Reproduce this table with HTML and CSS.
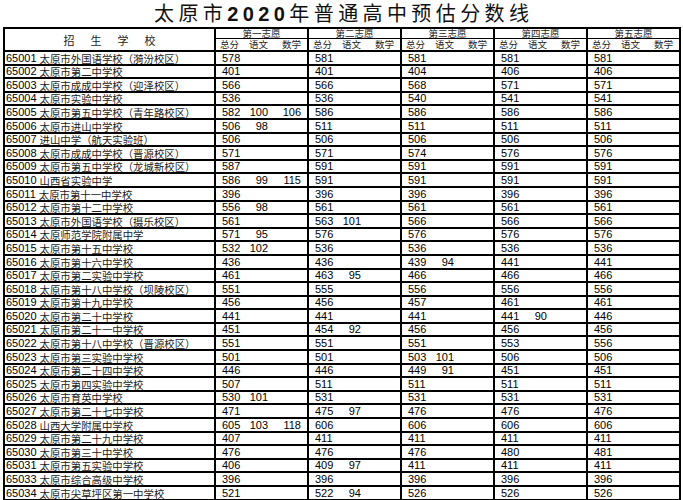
FILE: index.html
```html
<!DOCTYPE html>
<html lang="zh-CN">
<head>
<meta charset="utf-8">
<title>太原市2020年普通高中预估分数线</title>
<link rel="stylesheet" href="styles.css">
</head>
<body>
<div class="page">
<h1 class="title">太原市<span class="num">2020</span>年普通高中预估分数线</h1>
<table class="scores">
<colgroup>
<col class="c-school">
<col class="c-g"><col class="c-g"><col class="c-g"><col class="c-g"><col class="c-g">
</colgroup>
<thead>
<tr class="hr1">
<th rowspan="2" class="school-h">招生学校</th>
<th class="grp">第一志愿</th>
<th class="grp">第二志愿</th>
<th class="grp">第三志愿</th>
<th class="grp">第四志愿</th>
<th class="grp">第五志愿</th>
</tr>
<tr class="hr2">
<th class="g"><div class="v"><span>总分</span><span>语文</span><span>数学</span></div></th>
<th class="g"><div class="v"><span>总分</span><span>语文</span><span>数学</span></div></th>
<th class="g"><div class="v"><span>总分</span><span>语文</span><span>数学</span></div></th>
<th class="g"><div class="v"><span>总分</span><span>语文</span><span>数学</span></div></th>
<th class="g"><div class="v"><span>总分</span><span>语文</span><span>数学</span></div></th>
</tr>
</thead>
<tbody>
<tr><td class="school"><span class="code">65001</span><span class="name">太原市外国语学校（漪汾校区）</span></td><td class="g"><div class="v"><span>578</span><span></span><span></span></div></td><td class="g"><div class="v"><span>581</span><span></span><span></span></div></td><td class="g"><div class="v"><span>581</span><span></span><span></span></div></td><td class="g"><div class="v"><span>581</span><span></span><span></span></div></td><td class="g"><div class="v"><span>581</span><span></span><span></span></div></td></tr>
<tr><td class="school"><span class="code">65002</span><span class="name">太原市第二中学校</span></td><td class="g"><div class="v"><span>401</span><span></span><span></span></div></td><td class="g"><div class="v"><span>401</span><span></span><span></span></div></td><td class="g"><div class="v"><span>404</span><span></span><span></span></div></td><td class="g"><div class="v"><span>406</span><span></span><span></span></div></td><td class="g"><div class="v"><span>406</span><span></span><span></span></div></td></tr>
<tr><td class="school"><span class="code">65003</span><span class="name">太原市成成中学校（迎泽校区）</span></td><td class="g"><div class="v"><span>566</span><span></span><span></span></div></td><td class="g"><div class="v"><span>566</span><span></span><span></span></div></td><td class="g"><div class="v"><span>568</span><span></span><span></span></div></td><td class="g"><div class="v"><span>571</span><span></span><span></span></div></td><td class="g"><div class="v"><span>571</span><span></span><span></span></div></td></tr>
<tr><td class="school"><span class="code">65004</span><span class="name">太原市实验中学校</span></td><td class="g"><div class="v"><span>536</span><span></span><span></span></div></td><td class="g"><div class="v"><span>536</span><span></span><span></span></div></td><td class="g"><div class="v"><span>540</span><span></span><span></span></div></td><td class="g"><div class="v"><span>541</span><span></span><span></span></div></td><td class="g"><div class="v"><span>541</span><span></span><span></span></div></td></tr>
<tr><td class="school"><span class="code">65005</span><span class="name">太原市第五中学校（青年路校区）</span></td><td class="g"><div class="v"><span>582</span><span>100</span><span>106</span></div></td><td class="g"><div class="v"><span>586</span><span></span><span></span></div></td><td class="g"><div class="v"><span>586</span><span></span><span></span></div></td><td class="g"><div class="v"><span>586</span><span></span><span></span></div></td><td class="g"><div class="v"><span>586</span><span></span><span></span></div></td></tr>
<tr><td class="school"><span class="code">65006</span><span class="name">太原市进山中学校</span></td><td class="g"><div class="v"><span>506</span><span>98</span><span></span></div></td><td class="g"><div class="v"><span>511</span><span></span><span></span></div></td><td class="g"><div class="v"><span>511</span><span></span><span></span></div></td><td class="g"><div class="v"><span>511</span><span></span><span></span></div></td><td class="g"><div class="v"><span>511</span><span></span><span></span></div></td></tr>
<tr><td class="school"><span class="code">65007</span><span class="name">进山中学（航天实验班）</span></td><td class="g"><div class="v"><span>506</span><span></span><span></span></div></td><td class="g"><div class="v"><span>506</span><span></span><span></span></div></td><td class="g"><div class="v"><span>506</span><span></span><span></span></div></td><td class="g"><div class="v"><span>506</span><span></span><span></span></div></td><td class="g"><div class="v"><span>506</span><span></span><span></span></div></td></tr>
<tr><td class="school"><span class="code">65008</span><span class="name">太原市成成中学校（晋源校区）</span></td><td class="g"><div class="v"><span>571</span><span></span><span></span></div></td><td class="g"><div class="v"><span>571</span><span></span><span></span></div></td><td class="g"><div class="v"><span>574</span><span></span><span></span></div></td><td class="g"><div class="v"><span>576</span><span></span><span></span></div></td><td class="g"><div class="v"><span>576</span><span></span><span></span></div></td></tr>
<tr><td class="school"><span class="code">65009</span><span class="name">太原市第五中学校（龙城新校区）</span></td><td class="g"><div class="v"><span>587</span><span></span><span></span></div></td><td class="g"><div class="v"><span>591</span><span></span><span></span></div></td><td class="g"><div class="v"><span>591</span><span></span><span></span></div></td><td class="g"><div class="v"><span>591</span><span></span><span></span></div></td><td class="g"><div class="v"><span>591</span><span></span><span></span></div></td></tr>
<tr><td class="school"><span class="code">65010</span><span class="name">山西省实验中学</span></td><td class="g"><div class="v"><span>586</span><span>99</span><span>115</span></div></td><td class="g"><div class="v"><span>591</span><span></span><span></span></div></td><td class="g"><div class="v"><span>591</span><span></span><span></span></div></td><td class="g"><div class="v"><span>591</span><span></span><span></span></div></td><td class="g"><div class="v"><span>591</span><span></span><span></span></div></td></tr>
<tr><td class="school"><span class="code">65011</span><span class="name">太原市第十一中学校</span></td><td class="g"><div class="v"><span>396</span><span></span><span></span></div></td><td class="g"><div class="v"><span>396</span><span></span><span></span></div></td><td class="g"><div class="v"><span>396</span><span></span><span></span></div></td><td class="g"><div class="v"><span>396</span><span></span><span></span></div></td><td class="g"><div class="v"><span>396</span><span></span><span></span></div></td></tr>
<tr><td class="school"><span class="code">65012</span><span class="name">太原市第十二中学校</span></td><td class="g"><div class="v"><span>556</span><span>98</span><span></span></div></td><td class="g"><div class="v"><span>561</span><span></span><span></span></div></td><td class="g"><div class="v"><span>561</span><span></span><span></span></div></td><td class="g"><div class="v"><span>561</span><span></span><span></span></div></td><td class="g"><div class="v"><span>561</span><span></span><span></span></div></td></tr>
<tr><td class="school"><span class="code">65013</span><span class="name">太原市外国语学校（摄乐校区）</span></td><td class="g"><div class="v"><span>561</span><span></span><span></span></div></td><td class="g"><div class="v"><span>563</span><span>101</span><span></span></div></td><td class="g"><div class="v"><span>566</span><span></span><span></span></div></td><td class="g"><div class="v"><span>566</span><span></span><span></span></div></td><td class="g"><div class="v"><span>566</span><span></span><span></span></div></td></tr>
<tr><td class="school"><span class="code">65014</span><span class="name">太原师范学院附属中学</span></td><td class="g"><div class="v"><span>571</span><span>95</span><span></span></div></td><td class="g"><div class="v"><span>576</span><span></span><span></span></div></td><td class="g"><div class="v"><span>576</span><span></span><span></span></div></td><td class="g"><div class="v"><span>576</span><span></span><span></span></div></td><td class="g"><div class="v"><span>576</span><span></span><span></span></div></td></tr>
<tr><td class="school"><span class="code">65015</span><span class="name">太原市第十五中学校</span></td><td class="g"><div class="v"><span>532</span><span>102</span><span></span></div></td><td class="g"><div class="v"><span>536</span><span></span><span></span></div></td><td class="g"><div class="v"><span>536</span><span></span><span></span></div></td><td class="g"><div class="v"><span>536</span><span></span><span></span></div></td><td class="g"><div class="v"><span>536</span><span></span><span></span></div></td></tr>
<tr><td class="school"><span class="code">65016</span><span class="name">太原市第十六中学校</span></td><td class="g"><div class="v"><span>436</span><span></span><span></span></div></td><td class="g"><div class="v"><span>436</span><span></span><span></span></div></td><td class="g"><div class="v"><span>439</span><span>94</span><span></span></div></td><td class="g"><div class="v"><span>441</span><span></span><span></span></div></td><td class="g"><div class="v"><span>441</span><span></span><span></span></div></td></tr>
<tr><td class="school"><span class="code">65017</span><span class="name">太原市第二实验中学校</span></td><td class="g"><div class="v"><span>461</span><span></span><span></span></div></td><td class="g"><div class="v"><span>463</span><span>95</span><span></span></div></td><td class="g"><div class="v"><span>466</span><span></span><span></span></div></td><td class="g"><div class="v"><span>466</span><span></span><span></span></div></td><td class="g"><div class="v"><span>466</span><span></span><span></span></div></td></tr>
<tr><td class="school"><span class="code">65018</span><span class="name">太原市第十八中学校（坝陵校区）</span></td><td class="g"><div class="v"><span>551</span><span></span><span></span></div></td><td class="g"><div class="v"><span>555</span><span></span><span></span></div></td><td class="g"><div class="v"><span>556</span><span></span><span></span></div></td><td class="g"><div class="v"><span>556</span><span></span><span></span></div></td><td class="g"><div class="v"><span>556</span><span></span><span></span></div></td></tr>
<tr><td class="school"><span class="code">65019</span><span class="name">太原市第十九中学校</span></td><td class="g"><div class="v"><span>456</span><span></span><span></span></div></td><td class="g"><div class="v"><span>456</span><span></span><span></span></div></td><td class="g"><div class="v"><span>457</span><span></span><span></span></div></td><td class="g"><div class="v"><span>461</span><span></span><span></span></div></td><td class="g"><div class="v"><span>461</span><span></span><span></span></div></td></tr>
<tr><td class="school"><span class="code">65020</span><span class="name">太原市第二十中学校</span></td><td class="g"><div class="v"><span>441</span><span></span><span></span></div></td><td class="g"><div class="v"><span>441</span><span></span><span></span></div></td><td class="g"><div class="v"><span>441</span><span></span><span></span></div></td><td class="g"><div class="v"><span>441</span><span>90</span><span></span></div></td><td class="g"><div class="v"><span>446</span><span></span><span></span></div></td></tr>
<tr><td class="school"><span class="code">65021</span><span class="name">太原市第二十一中学校</span></td><td class="g"><div class="v"><span>451</span><span></span><span></span></div></td><td class="g"><div class="v"><span>454</span><span>92</span><span></span></div></td><td class="g"><div class="v"><span>456</span><span></span><span></span></div></td><td class="g"><div class="v"><span>456</span><span></span><span></span></div></td><td class="g"><div class="v"><span>456</span><span></span><span></span></div></td></tr>
<tr><td class="school"><span class="code">65022</span><span class="name">太原市第十八中学校（晋源校区）</span></td><td class="g"><div class="v"><span>551</span><span></span><span></span></div></td><td class="g"><div class="v"><span>551</span><span></span><span></span></div></td><td class="g"><div class="v"><span>551</span><span></span><span></span></div></td><td class="g"><div class="v"><span>553</span><span></span><span></span></div></td><td class="g"><div class="v"><span>556</span><span></span><span></span></div></td></tr>
<tr><td class="school"><span class="code">65023</span><span class="name">太原市第三实验中学校</span></td><td class="g"><div class="v"><span>501</span><span></span><span></span></div></td><td class="g"><div class="v"><span>501</span><span></span><span></span></div></td><td class="g"><div class="v"><span>503</span><span>101</span><span></span></div></td><td class="g"><div class="v"><span>506</span><span></span><span></span></div></td><td class="g"><div class="v"><span>506</span><span></span><span></span></div></td></tr>
<tr><td class="school"><span class="code">65024</span><span class="name">太原市第二十四中学校</span></td><td class="g"><div class="v"><span>446</span><span></span><span></span></div></td><td class="g"><div class="v"><span>446</span><span></span><span></span></div></td><td class="g"><div class="v"><span>449</span><span>91</span><span></span></div></td><td class="g"><div class="v"><span>451</span><span></span><span></span></div></td><td class="g"><div class="v"><span>451</span><span></span><span></span></div></td></tr>
<tr><td class="school"><span class="code">65025</span><span class="name">太原市第四实验中学校</span></td><td class="g"><div class="v"><span>507</span><span></span><span></span></div></td><td class="g"><div class="v"><span>511</span><span></span><span></span></div></td><td class="g"><div class="v"><span>511</span><span></span><span></span></div></td><td class="g"><div class="v"><span>511</span><span></span><span></span></div></td><td class="g"><div class="v"><span>511</span><span></span><span></span></div></td></tr>
<tr><td class="school"><span class="code">65026</span><span class="name">太原市育英中学校</span></td><td class="g"><div class="v"><span>530</span><span>101</span><span></span></div></td><td class="g"><div class="v"><span>531</span><span></span><span></span></div></td><td class="g"><div class="v"><span>531</span><span></span><span></span></div></td><td class="g"><div class="v"><span>531</span><span></span><span></span></div></td><td class="g"><div class="v"><span>531</span><span></span><span></span></div></td></tr>
<tr><td class="school"><span class="code">65027</span><span class="name">太原市第二十七中学校</span></td><td class="g"><div class="v"><span>471</span><span></span><span></span></div></td><td class="g"><div class="v"><span>475</span><span>97</span><span></span></div></td><td class="g"><div class="v"><span>476</span><span></span><span></span></div></td><td class="g"><div class="v"><span>476</span><span></span><span></span></div></td><td class="g"><div class="v"><span>476</span><span></span><span></span></div></td></tr>
<tr><td class="school"><span class="code">65028</span><span class="name">山西大学附属中学校</span></td><td class="g"><div class="v"><span>605</span><span>103</span><span>118</span></div></td><td class="g"><div class="v"><span>606</span><span></span><span></span></div></td><td class="g"><div class="v"><span>606</span><span></span><span></span></div></td><td class="g"><div class="v"><span>606</span><span></span><span></span></div></td><td class="g"><div class="v"><span>606</span><span></span><span></span></div></td></tr>
<tr><td class="school"><span class="code">65029</span><span class="name">太原市第二十九中学校</span></td><td class="g"><div class="v"><span>407</span><span></span><span></span></div></td><td class="g"><div class="v"><span>411</span><span></span><span></span></div></td><td class="g"><div class="v"><span>411</span><span></span><span></span></div></td><td class="g"><div class="v"><span>411</span><span></span><span></span></div></td><td class="g"><div class="v"><span>411</span><span></span><span></span></div></td></tr>
<tr><td class="school"><span class="code">65030</span><span class="name">太原市第三十中学校</span></td><td class="g"><div class="v"><span>476</span><span></span><span></span></div></td><td class="g"><div class="v"><span>476</span><span></span><span></span></div></td><td class="g"><div class="v"><span>476</span><span></span><span></span></div></td><td class="g"><div class="v"><span>480</span><span></span><span></span></div></td><td class="g"><div class="v"><span>481</span><span></span><span></span></div></td></tr>
<tr><td class="school"><span class="code">65031</span><span class="name">太原市第五实验中学校</span></td><td class="g"><div class="v"><span>406</span><span></span><span></span></div></td><td class="g"><div class="v"><span>409</span><span>97</span><span></span></div></td><td class="g"><div class="v"><span>411</span><span></span><span></span></div></td><td class="g"><div class="v"><span>411</span><span></span><span></span></div></td><td class="g"><div class="v"><span>411</span><span></span><span></span></div></td></tr>
<tr><td class="school"><span class="code">65033</span><span class="name">太原市综合高级中学校</span></td><td class="g"><div class="v"><span>396</span><span></span><span></span></div></td><td class="g"><div class="v"><span>396</span><span></span><span></span></div></td><td class="g"><div class="v"><span>396</span><span></span><span></span></div></td><td class="g"><div class="v"><span>396</span><span></span><span></span></div></td><td class="g"><div class="v"><span>396</span><span></span><span></span></div></td></tr>
<tr><td class="school"><span class="code">65034</span><span class="name">太原市尖草坪区第一中学校</span></td><td class="g"><div class="v"><span>521</span><span></span><span></span></div></td><td class="g"><div class="v"><span>522</span><span>94</span><span></span></div></td><td class="g"><div class="v"><span>526</span><span></span><span></span></div></td><td class="g"><div class="v"><span>526</span><span></span><span></span></div></td><td class="g"><div class="v"><span>526</span><span></span><span></span></div></td></tr>
</tbody>
</table>
</div>
</body>
</html>
```

FILE: styles.css
```css
html, body {
  margin: 0;
  padding: 0;
  background: #ffffff;
}

body {
  color: #000000;
  font-family: "Liberation Sans", "Noto Sans CJK SC", sans-serif;
}

.page {
  width: 683px;
  height: 500px;
  overflow: hidden;
}

.title {
  margin: 0;
  height: 27px;
  line-height: 26px;
  font-size: 20px;
  font-weight: normal;
  text-align: center;
  letter-spacing: 4.4px;
  text-indent: 4.4px;
  font-family: "Noto Sans CJK SC", sans-serif;
  color: #111;
  white-space: nowrap;
}

.title .num {
  font-family: "Liberation Sans", sans-serif;
  font-weight: bold;
}

.scores {
  margin-left: 3px;
  width: 677px;
  border-collapse: collapse;
  table-layout: fixed;
  border: 2px solid #000;
}

.c-school { width: 211px; }
.c-g { width: 93px; }

.scores th,
.scores td {
  padding: 0;
  white-space: nowrap;
  font-weight: normal;
}

.hr1 th {
  height: 9px;
  line-height: 9px;
  font-family: "Noto Sans CJK SC", sans-serif;
  font-size: 9.5px;
  color: #222;
  vertical-align: top;
}

.hr2 th {
  height: 11px;
  line-height: 11px;
  font-family: "Noto Sans CJK SC", sans-serif;
  font-size: 9.5px;
  color: #222;
  border-bottom: 2px solid #000;
  vertical-align: bottom;
}

.school-h {
  border-right: 2px solid #000;
  border-bottom: 2px solid #000;
  text-align: center;
  letter-spacing: 16px;
  text-indent: 16px;
  font-size: 11px !important;
  line-height: 12px !important;
  vertical-align: middle !important;
}

.grp {
  text-align: center;
  border-left: 2px solid #000;
  border-right: 2px solid #000;
  border-bottom: 1px solid #000;
}

.g {
  border-left: 2px solid #000;
  border-right: 2px solid #000;
}

.v {
  display: grid;
  grid-template-columns: 29px 23px 1fr;
}

.v span:nth-child(1) {
  padding-left: 6px;
  text-align: left;
}

.v span:nth-child(2) {
  text-align: right;
}

.v span:nth-child(3) {
  text-align: right;
  padding-right: 6px;
}

.hr2 .v span:nth-child(1) {
  padding-left: 4px;
}

tbody tr {
  height: 13.6px;
}

tbody td {
  border-bottom: 2px solid #000;
  font-size: 11px;
  line-height: 11px;
  vertical-align: bottom;
  overflow: hidden;
}

td.school {
  border-right: 2px solid #000;
  text-indent: 1px;
}

.code {
  font-family: "Liberation Sans", sans-serif;
  font-size: 11px;
  line-height: 11px;
  vertical-align: top;
}

.name {
  font-family: "Noto Sans CJK SC", sans-serif;
  font-size: 10.4px;
  line-height: 11px;
  vertical-align: top;
  margin-left: 3px;
  color: #1a1a1a;
}
```
